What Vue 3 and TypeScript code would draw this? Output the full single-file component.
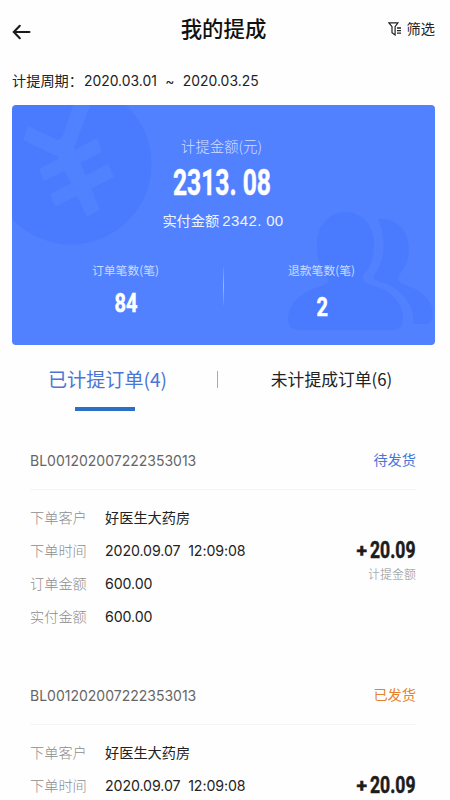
<script setup lang="ts">
interface Order {
  code: string
  status: string
  state: 'pending' | 'shipped'
  fields: { label: string; value: string }[]
  commission: string
}

const fields = [
  { label: '下单客户', value: '好医生大药房' },
  { label: '下单时间', value: '2020.09.07  12:09:08' },
  { label: '订单金额', value: '600.00' },
  { label: '实付金额', value: '600.00' },
]

const orders: Order[] = [
  { code: 'BL001202007222353013', status: '待发货', state: 'pending', fields, commission: '20.09' },
  { code: 'BL001202007222353013', status: '已发货', state: 'shipped', fields, commission: '20.09' },
]
</script>

<template>
  <main class="page">
    <header class="topbar">
      <svg class="back" viewBox="0 0 20 16" fill="none" stroke="#1b1b1b" stroke-width="2.1" stroke-linecap="round">
        <path d="M17.500 8H2.500M7.800 1.800L1.800 8l6 6.200" />
      </svg>
      <h1>我的提成</h1>
      <div class="filter">
        <svg viewBox="0 0 14 14" fill="none" stroke="#222" stroke-width="1.2">
          <path d="M.9 .8h9L7.100 4.600v8.400L4 10.800V4.600z" />
          <path d="M9 6h4M9 8.600h4M9 11.200h4" stroke-width="1.300" />
        </svg>
        <span>筛选</span>
      </div>
    </header>

    <div class="period">
      <span class="period-label">计提周期：</span>
      <span>2020.03.01</span><span class="tilde">~</span><span>2020.03.25</span>
    </div>

    <section class="card">
      <svg class="decor" viewBox="12 105 423 240">
        <circle cx="71" cy="164" r="80.500" fill="#4a7bff" />
        <g fill="#5081ff">
          <path d="M28 126L57 140L62 138L74 103H91L74 148L66 157L54 155L23 140z" />
          <path d="M39 169L97 138L102 152L44 181z" />
          <path d="M50 194L108 164L114 177L55 207z" />
          <path d="M57 155L74 147L100 210L87 217z" />
        </g>
        <g fill="#4a7bff">
          <path d="M345.500 212C361 212 374 225 374 243C374 258 370 269 363 275C362 282 366 284 374 286C393 291 403 304 403 319C403 326 399 330 393 330H299C292 330 288 327 288 320C288 302 303 291 321 286C327 284 330 282 327 276C320 269 317 258 317 243C317 225 330 212 345.500 212z" />
          <path d="M378 219C395 217 409 230 409 249C409 261 405 269 399 275C397 280 399 283 405 285C423 290 433 301 433 315C433 321 429 324 424 324H413C415 305 402 291 387 284C376 280 371 279 374 275C387 259 385 235 378 219z" />
        </g>
      </svg>
      <div class="card-label">计提金额(元)</div>
      <svg class="amount" viewBox="0 0 100 28">
        <text x="1" y="27" font-size="36" textLength="98" lengthAdjust="spacingAndGlyphs">2313. 08</text>
      </svg>
      <div class="paid">实付金额 <span>2342. 00</span></div>
      <div class="stats">
        <div class="stat">
          <span class="stat-label">订单笔数(笔)</span>
          <svg class="stat-value" viewBox="0 0 24 20">
            <text x="0.500" y="19" font-size="25" textLength="23" lengthAdjust="spacingAndGlyphs">84</text>
          </svg>
        </div>
        <i class="stat-divider"></i>
        <div class="stat lower">
          <span class="stat-label">退款笔数(笔)</span>
          <svg class="stat-value" viewBox="0 0 24 20">
            <text x="6.500" y="19" font-size="25" textLength="11.500" lengthAdjust="spacingAndGlyphs">2</text>
          </svg>
        </div>
      </div>
    </section>

    <nav class="tabs">
      <div class="tab active">已计提订单(4)</div>
      <i class="tab-divider"></i>
      <div class="tab">未计提成订单(6)</div>
    </nav>

    <article v-for="(order, i) in orders" :key="i" class="order">
      <div class="order-head">
        <span class="code">{{ order.code }}</span>
        <span :class="['status', order.state]">{{ order.status }}</span>
      </div>
      <div class="order-body">
        <dl>
          <div v-for="field in order.fields" :key="field.label" class="field">
            <dt>{{ field.label }}</dt>
            <dd>{{ field.value }}</dd>
          </div>
        </dl>
        <div class="commission">
          <svg class="commission-value" viewBox="0 0 60 20">
            <text x="0.500" y="17" font-size="19" textLength="10.500" lengthAdjust="spacingAndGlyphs">+</text>
            <text x="14" y="18" font-size="23" textLength="45.500" lengthAdjust="spacingAndGlyphs">{{ order.commission }}</text>
          </svg>
          <span>计提金额</span>
        </div>
      </div>
    </article>
  </main>
</template>

<style>
body {
  margin: 0;
  background: #fff;
  overflow: hidden;
}
</style>

<style scoped>
.page {
  box-sizing: border-box;
  width: 450px;
  height: 800px;
  overflow: hidden;
  padding: 0 15px 0 12px;
  background: #fefefe;
  color: #222;
  font-family: Inter, "Noto Sans CJK SC", sans-serif;
  font-size: 14.2px;
}
.topbar {
  display: grid;
  grid-template-columns: 1fr auto 1fr;
  align-items: center;
  height: 58px;
}
.back {
  width: 20px;
  height: 16px;
  margin-top: 6px;
}
h1 {
  margin: 0;
  color: #111;
  font-size: 21.4px;
  font-weight: 500;
  line-height: 30px;
}
.filter {
  display: flex;
  justify-content: flex-end;
  align-items: center;
  gap: 5px;
  line-height: 20px;
}
.filter svg {
  width: 14px;
  height: 14px;
}
.period {
  display: flex;
  height: 46.5px;
  line-height: 46px;
  font-size: 13.9px;
}
.period-label {
  width: 72px;
  font-size: 14.2px;
}
.tilde {
  width: 26px;
  text-align: center;
}
.card {
  position: relative;
  display: flex;
  flex-direction: column;
  align-items: center;
  height: 240px;
  border-radius: 4px;
  overflow: hidden;
  background: #5281ff;
  color: #fff;
  font-family: "Noto Sans CJK SC", sans-serif;
}
.card > :not(.decor) {
  position: relative;
}
.decor {
  position: absolute;
  left: 0;
  top: 0;
  width: 423px;
  height: 240px;
}
.card-label {
  margin-top: 31px;
  margin-left: -4px;
  color: #d3dfff;
  line-height: 20px;
  font-size: 14.4px;
  font-weight: 300;
}
.amount,
.stat-value,
.commission-value {
  overflow: visible;
}
.card text,
.commission text {
  font-family: Roboto, sans-serif;
  font-weight: 700;
  fill: currentColor;
  stroke: currentColor;
  stroke-width: 0.5px;
}
.amount {
  width: 100px;
  height: 28px;
  margin-top: 12px;
  margin-left: -3px;
}
.paid {
  margin-top: 14.5px;
  margin-left: -1px;
  line-height: 20px;
  color: #eef3ff;
}
.paid span {
  font-family: "Liberation Sans", sans-serif;
  font-size: 15px;
  letter-spacing: 0.35px;
}
.stats {
  display: flex;
  align-self: stretch;
  justify-content: center;
  margin-top: 28.5px;
}
.stat {
  display: flex;
  flex-direction: column;
  align-items: center;
  gap: 13px;
  width: 195px;
}
.stat.lower {
  gap: 17px;
}
.stat-label {
  color: #cbdaff;
  font-size: 11.8px;
  line-height: 20px;
}
.stat-value {
  width: 24px;
  height: 20px;
}
.stat-divider {
  width: 1px;
  height: 38px;
  margin-top: 7px;
  background: linear-gradient(#5d89ff, #9db7ff, #5d89ff);
}
.tabs {
  display: grid;
  grid-template-columns: 191px 29px 199px;
  justify-items: center;
  align-items: center;
  height: 69px;
  font-family: "Noto Sans CJK SC", sans-serif;
}
.tab {
  font-size: 16.8px;
  line-height: 30px;
}
.tab.active {
  position: relative;
  color: #4a76d5;
  font-size: 19.1px;
}
.tab.active::after {
  content: "";
  position: absolute;
  left: 50%;
  top: 43px;
  width: 60px;
  height: 4px;
  margin-left: -32.5px;
  background: #2a70c7;
}
.tab-divider {
  width: 1.5px;
  height: 17px;
  background: #aaa;
}
.order {
  height: 235.4px;
  padding: 0 19px 0 18px;
}
.order:first-of-type {
  margin-top: 19px;
}
.order-head {
  display: flex;
  justify-content: space-between;
  box-sizing: border-box;
  height: 57px;
  border-bottom: 1px solid #f5f5f5;
  line-height: 56px;
}
.code {
  color: #666;
  font-size: 14px;
}
.status {
  line-height: 54px;
}
.status.pending {
  color: #4775d8;
}
.status.shipped {
  color: #e4832d;
}
.order-body {
  display: flex;
  justify-content: space-between;
}
dl {
  margin: 11px 0 0;
}
.field {
  display: flex;
  height: 33px;
  line-height: 33px;
}
dt {
  width: 75px;
  color: #8d8d8d;
  font-weight: 300;
}
dd {
  margin: 0;
  white-space: pre;
  letter-spacing: -0.1px;
}
.field:first-child dd {
  letter-spacing: 0;
}
.commission {
  display: flex;
  flex-direction: column;
  align-items: flex-end;
  padding-top: 50.5px;
  color: #1c1c1c;
}
.commission-value {
  width: 60px;
  height: 20px;
}
.commission span {
  margin-top: 4.5px;
  color: #8d8d8d;
  font-size: 12px;
  font-weight: 300;
  line-height: 20px;
}
</style>
